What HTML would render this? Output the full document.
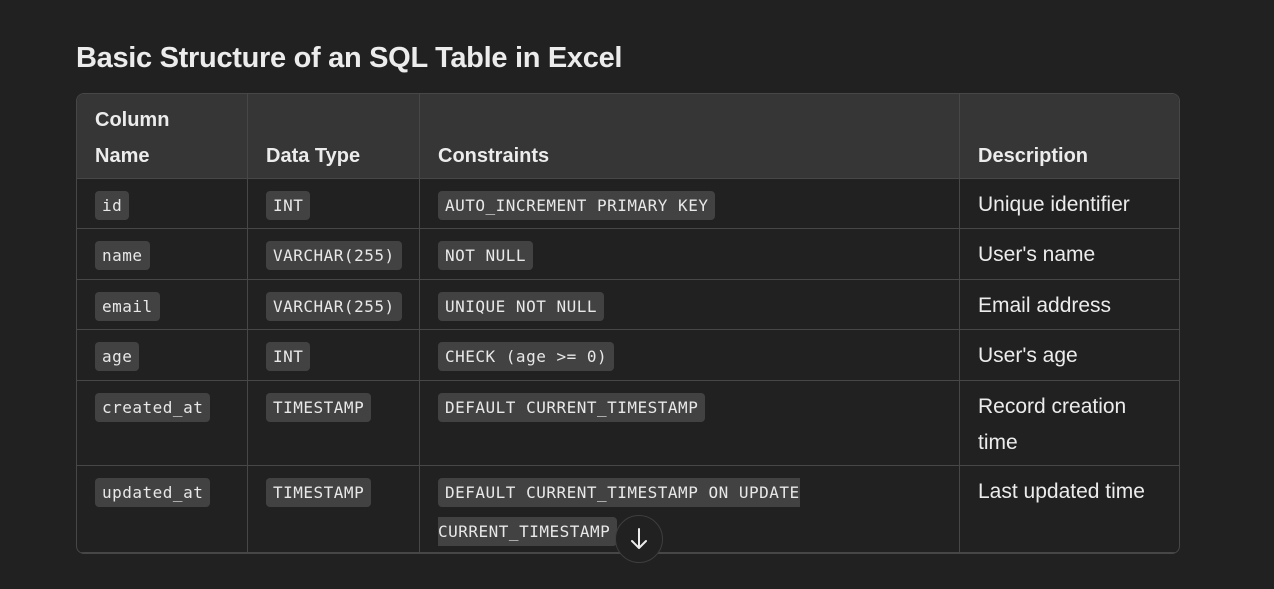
<!DOCTYPE html>
<html><head><meta charset="utf-8"><style>
body{margin:0;background:#212121;width:1274px;height:589px;overflow:hidden;font-family:"Liberation Sans",sans-serif;color:#ececec}
h2{position:absolute;left:76px;top:42px;margin:0;font-size:29px;font-weight:bold;letter-spacing:-0.3px}
.wrap{position:absolute;left:76px;top:93px;width:1102px;height:459px;border:1px solid #474747;border-radius:8px;overflow:hidden}
table{border-collapse:collapse;width:1104px;margin:-1px;table-layout:fixed}
td,th{border:1px solid #474747;vertical-align:top;text-align:left;padding:0 18px;font-size:21px;line-height:36px}
th{background:#363636;font-weight:bold;vertical-align:bottom;padding-bottom:4px;height:80px;font-size:20px}
td{padding-top:8px;padding-bottom:0}
code{font-family:"DejaVu Sans Mono","Liberation Mono",monospace;font-size:16px;letter-spacing:0.5px;background:#424242;border-radius:4px;padding:5px 7px;color:#e8e8e8}
.arr{position:absolute;left:615px;top:515px;width:48px;height:48px;border-radius:50%;border:1px solid #3e3e3e;background:#212121;box-sizing:border-box}
</style></head><body>
<h2>Basic Structure of an SQL Table in Excel</h2>
<div class="wrap"><table>
<colgroup><col style="width:171px"><col style="width:172px"><col style="width:540px"><col style="width:221px"></colgroup>
<tr><th>Column<br>Name</th><th>Data Type</th><th>Constraints</th><th>Description</th></tr>
<tr style="height:50px"><td><code>id</code></td><td><code>INT</code></td><td><code>AUTO_INCREMENT PRIMARY KEY</code></td><td>Unique identifier</td></tr>
<tr style="height:51px"><td><code>name</code></td><td><code>VARCHAR(255)</code></td><td><code>NOT NULL</code></td><td>User's name</td></tr>
<tr style="height:50px"><td><code>email</code></td><td><code>VARCHAR(255)</code></td><td><code>UNIQUE NOT NULL</code></td><td>Email address</td></tr>
<tr style="height:51px"><td><code>age</code></td><td><code>INT</code></td><td><code>CHECK (age &gt;= 0)</code></td><td>User's age</td></tr>
<tr style="height:85px"><td><code>created_at</code></td><td><code>TIMESTAMP</code></td><td><code>DEFAULT CURRENT_TIMESTAMP</code></td><td>Record creation time</td></tr>
<tr style="height:87px"><td><code>updated_at</code></td><td><code>TIMESTAMP</code></td><td style="padding-right:150px;line-height:38px;padding-top:7px"><code>DEFAULT CURRENT_TIMESTAMP ON UPDATE CURRENT_TIMESTAMP</code></td><td>Last updated time</td></tr>
</table></div>
<div class="arr"><svg width="48" height="48" viewBox="0 0 48 48" style="position:absolute;left:-1px;top:-1px"><path d="M24 14v19M17 26l7 7 7-7" stroke="#ececec" stroke-width="2" fill="none" stroke-linecap="round" stroke-linejoin="round"/></svg></div>
</body></html>
